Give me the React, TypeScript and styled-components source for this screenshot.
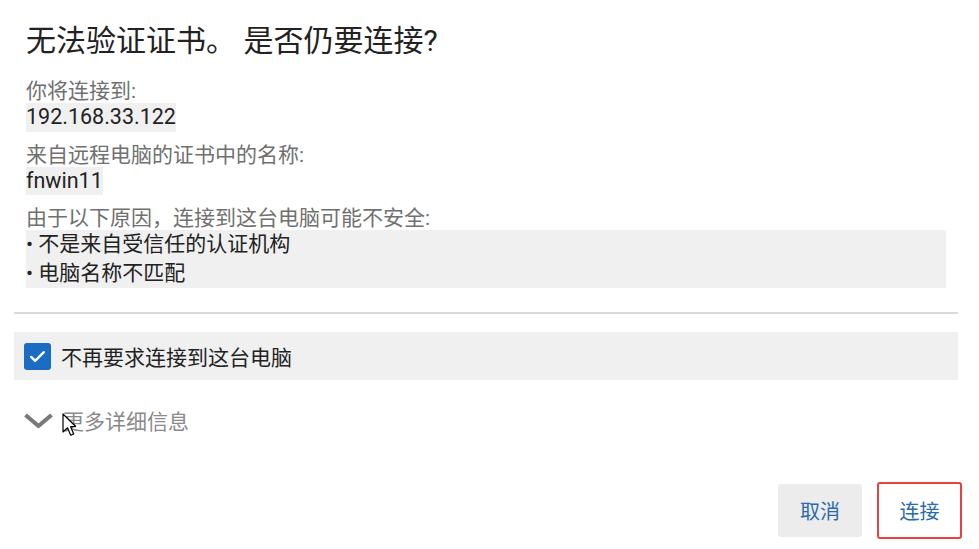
import React, { useState } from "react";
import styled, { createGlobalStyle } from "styled-components";

const GlobalStyle = createGlobalStyle`
  html, body {
    margin: 0;
    padding: 0;
    background: #ffffff;
  }
  body {
    font-family: Roboto, "Noto Sans CJK SC", sans-serif;
  }
`;

const Dialog = styled.div`
  width: 979px;
  height: 549px;
  box-sizing: border-box;
  padding: 19px 21px 0 14px;
  display: flex;
  flex-direction: column;
  background: #ffffff;
  overflow: hidden;
`;

const Content = styled.div`
  padding: 0 12px;
  display: flex;
  flex-direction: column;
`;

const Title = styled.h1`
  margin: 0 0 16px;
  font-size: 30px;
  font-weight: 400;
  line-height: 44px;
  color: #222222;
`;

const Label = styled.div`
  font-size: 21px;
  line-height: 24px;
  color: #707070;
`;

const Value = styled.div<{ $full?: boolean }>`
  align-self: ${(p) => (p.$full ? "stretch" : "flex-start")};
  background: #f0f0f0;
  color: #222222;
  font-size: 21.5px;
  line-height: 28.5px;
  margin-bottom: 11px;
`;

const Bullet = styled.div`
  font-size: 21px;
  line-height: 29px;
`;

const Divider = styled.hr`
  margin: 13px 0 0;
  border: none;
  height: 2px;
  background: #dadada;
`;

const CheckRow = styled.label`
  margin-top: 18px;
  height: 48px;
  background: #f0f0f0;
  display: flex;
  align-items: center;
  gap: 10px;
  padding-left: 10px;
  font-size: 21px;
  color: #222222;
  cursor: pointer;
`;

const CheckBox = styled.span<{ $checked: boolean }>`
  width: 27px;
  height: 27px;
  border-radius: 3px;
  background: ${(p) => (p.$checked ? "#1a6dc2" : "#ffffff")};
  border: ${(p) => (p.$checked ? "none" : "2px solid #777")};
  display: flex;
  align-items: center;
  justify-content: center;
  box-sizing: border-box;
`;

const DetailsRow = styled.div`
  margin-top: 26px;
  display: flex;
  align-items: center;
  gap: 9px;
  padding-left: 9px;
  height: 28px;
  font-size: 21px;
  color: #8a8a8a;
  position: relative;
`;

const Cursor = styled.svg`
  position: absolute;
  left: 48px;
  top: 7px;
`;

const Footer = styled.div`
  margin-top: auto;
  display: flex;
  justify-content: flex-end;
  align-items: center;
  gap: 15px;
  padding-bottom: 10px;
  margin-right: -4px;
`;

const Button = styled.button<{ $primary?: boolean }>`
  width: ${(p) => (p.$primary ? "85px" : "84px")};
  height: ${(p) => (p.$primary ? "57px" : "53px")};
  box-sizing: border-box;
  border-radius: 3px;
  background: ${(p) => (p.$primary ? "#ffffff" : "#ececec")};
  border: ${(p) => (p.$primary ? "2px solid #e8413f" : "none")};
  color: #2a6aad;
  font-family: Roboto, "Noto Sans CJK SC", sans-serif;
  font-size: 20px;
  cursor: pointer;
`;

export default function App() {
  const [checked, setChecked] = useState(true);

  return (
    <>
      <GlobalStyle />
      <Dialog>
        <Content>
          <Title>无法验证证书。 是否仍要连接?</Title>
          <Label>你将连接到:</Label>
          <Value>192.168.33.122</Value>
          <Label>来自远程电脑的证书中的名称:</Label>
          <Value>fnwin11</Value>
          <Label>由于以下原因，连接到这台电脑可能不安全:</Label>
          <Value $full>
            <Bullet>• 不是来自受信任的认证机构</Bullet>
            <Bullet>• 电脑名称不匹配</Bullet>
          </Value>
        </Content>
        <Divider />
        <CheckRow onClick={() => setChecked((c) => !c)}>
          <CheckBox $checked={checked}>
            {checked && (
              <svg width="19" height="19" viewBox="0 0 24 24">
                <path d="M4 12.5l5 5L20 6.5" fill="none" stroke="#ffffff" strokeWidth="3" strokeLinecap="round" strokeLinejoin="round" />
              </svg>
            )}
          </CheckBox>
          不再要求连接到这台电脑
        </CheckRow>
        <DetailsRow>
          <svg width="31" height="17" viewBox="0 0 31 17">
            <path d="M2.5 3l13 11L28.5 3" fill="none" stroke="#7a7a7a" strokeWidth="4.2" strokeLinejoin="round" />
          </svg>
          更多详细信息
          <Cursor width="14" height="24" viewBox="0 0 14 24">
            <path d="M1 1v18l4.5-4.2 3.2 7.4 3-1.3-3.1-7.2H14z" fill="#ffffff" stroke="#000000" strokeWidth="1.2" strokeLinejoin="round" />
          </Cursor>
        </DetailsRow>
        <Footer>
          <Button>取消</Button>
          <Button $primary>连接</Button>
        </Footer>
      </Dialog>
    </>
  );
}
